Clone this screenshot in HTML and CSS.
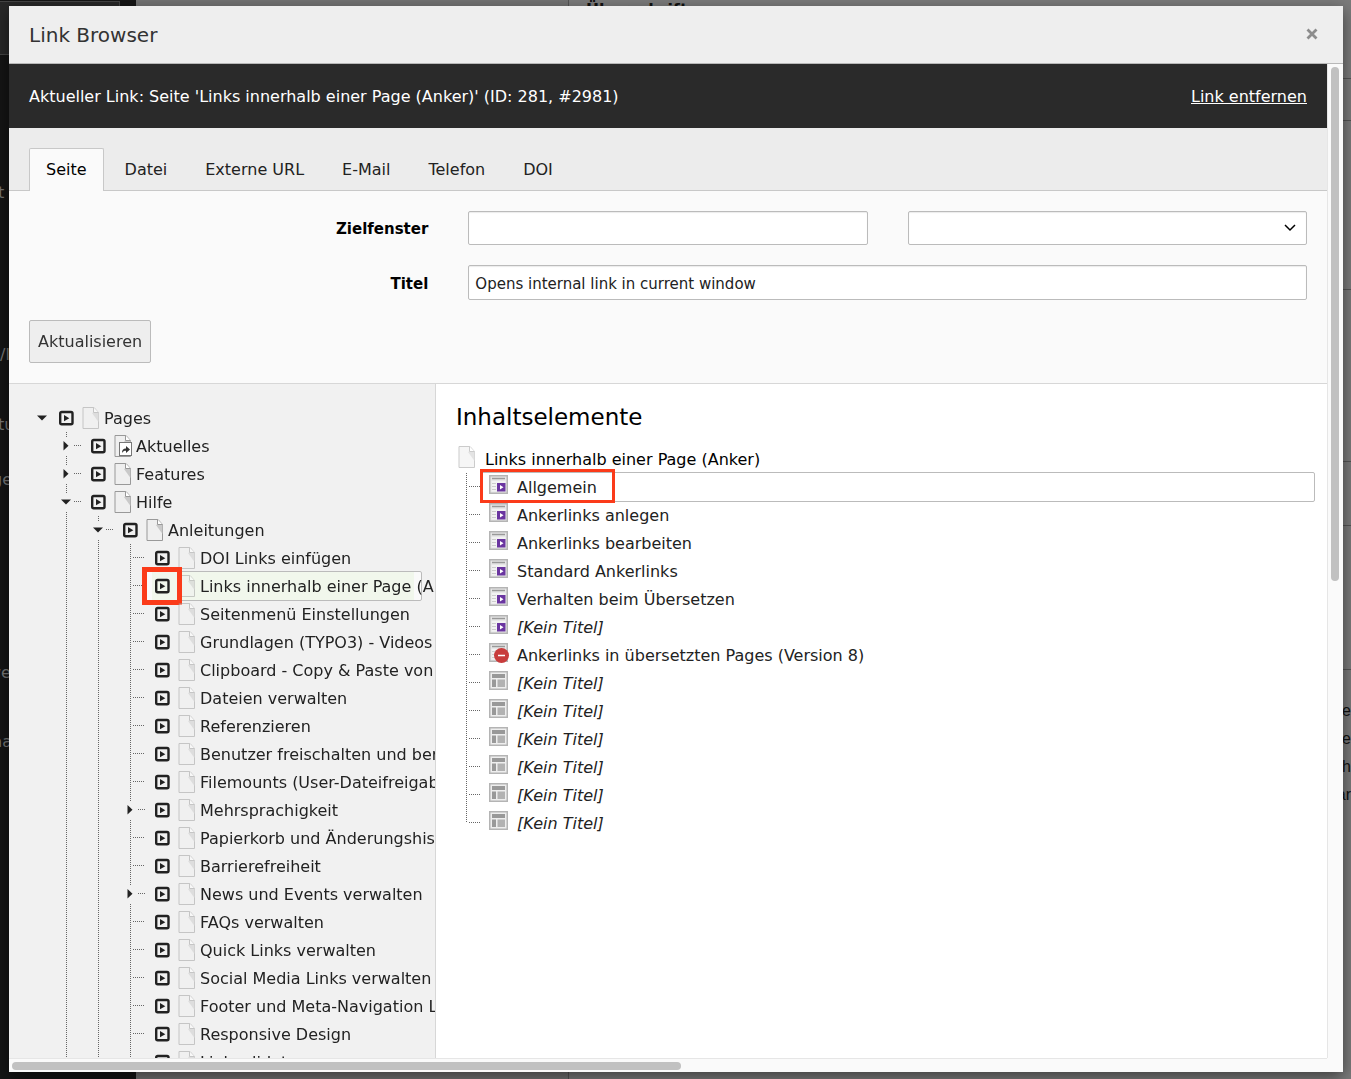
FILE: index.html
```html
<!DOCTYPE html>
<html lang="de">
<head>
<meta charset="utf-8">
<title>Link Browser</title>
<link rel="stylesheet" href="styles.css">
</head>
<body>
<svg class="sprite" aria-hidden="true">
  <symbol id="select" viewBox="0 0 16 16"><rect x="2.200" y="2" width="12.300" height="12.300" rx="1.500" fill="none" stroke="#222" stroke-width="2.400"/><path d="M6 5v6.300l5.300-3.150z" fill="#222"/></symbol>
  <symbol id="page" viewBox="0 0 18 22"><path d="M1 .5h11L16.500 5.500v16H1z" fill="#efefef" stroke="#999"/><path d="M11.500 5.500h5V15L10 6z" fill="#c9c9c9"/><path d="M11.500 .5v5h5" fill="#fff" stroke="#999"/></symbol>
  <symbol id="shortcut" viewBox="0 0 13 14"><rect x=".5" y=".5" width="12" height="13" fill="#fff" stroke="#777"/><path d="M3 11c0-3 1-4.500 4-4.500V4l4 3.500L7 11V8.800c-2 0-3 .5-4 2.200z" fill="#333"/></symbol>
  <symbol id="open" viewBox="0 0 16 16"><path d="M3 5.500h10L8 10.500z" fill="#222"/></symbol>
  <symbol id="closed" viewBox="0 0 16 16"><path d="M5.500 3v9.500l5-4.750z" fill="#222"/></symbol>
  <symbol id="plugin" viewBox="0 0 20 20"><rect x=".75" y=".75" width="17.500" height="17.500" fill="#e6e6e6" stroke="#b4b4b4" stroke-width="1.500"/><path d="M3 3.500h13" stroke="#999" stroke-width="1.500"/><path d="M2.500 6h14v10.500h-14z" fill="#f2f2f2"/><path d="M3 8.500h4M3 11.500h4M3 14.500h4" stroke="#ccc"/><rect x="8" y="8" width="8.500" height="8.500" fill="#6a35a0"/><path d="M11 10v4.500l3.500-2.250z" fill="#fff"/></symbol>
  <symbol id="hidden" viewBox="0 0 20 20"><rect x=".75" y=".75" width="17.500" height="17.500" fill="#e6e6e6" stroke="#b4b4b4" stroke-width="1.500"/><path d="M3 3.500h13" stroke="#999" stroke-width="1.500"/><path d="M2.500 6h14v10.500h-14z" fill="#f2f2f2"/><path d="M3 8.500h4M3 11.500h4M3 14.500h4" stroke="#ccc"/><circle cx="12.500" cy="12.500" r="7.500" fill="#c83c3c"/><path d="M9 12.500h7" stroke="#fff" stroke-width="1.500"/></symbol>
  <symbol id="layout" viewBox="0 0 20 20"><rect x=".75" y=".75" width="17.500" height="17.500" fill="#eee" stroke="#b4b4b4" stroke-width="1.500"/><path d="M3 3h13v4H3zM3 8.500h4V16H3z" fill="#999"/><path d="M8.500 8.500H16V16H8.500z" fill="#b2b2b2"/></symbol>
</svg>

<div class="backdrop" aria-hidden="true">
  <div class="backdrop-nav">
    <span class="nav-head"></span>
    <span class="bit bit-1">t</span>
    <span class="bit bit-2">/l</span>
    <span class="bit bit-3">tu</span>
    <span class="bit bit-4">ge</span>
    <span class="bit bit-5">we</span>
    <span class="bit bit-6">na</span>
  </div>
  <div class="backdrop-tree"></div>
  <div class="backdrop-doc">
    <b class="doc-title">Überschrift</b>
    <span class="rule rule-1"></span><span class="rule rule-2"></span><span class="rule rule-3"></span><span class="rule rule-4"></span><span class="rule rule-5"></span><span class="rule rule-6"></span>
    <p class="doc-text">te<br>e<br>h<br>ar</p>
  </div>
</div>

<div class="modal" role="dialog" aria-labelledby="modal-title">
  <header class="modal-header">
    <h1 id="modal-title">Link Browser</h1>
    <button class="close" type="button" aria-label="Schließen"><svg width="12" height="12" viewBox="0 0 12 12"><path d="M1.500 1.500l9 9M10.500 1.500l-9 9" stroke="#8c8c8c" stroke-width="2.800"/></svg></button>
  </header>
  <div class="viewport">
    <main class="content">
      <div class="current">
        <span>Aktueller Link: Seite 'Links innerhalb einer Page (Anker)' (ID: 281, #2981)</span>
        <a href="#">Link entfernen</a>
      </div>
      <nav class="tabs">
        <a class="tab active" href="#">Seite</a>
        <a class="tab" href="#">Datei</a>
        <a class="tab" href="#">Externe URL</a>
        <a class="tab" href="#">E-Mail</a>
        <a class="tab" href="#">Telefon</a>
        <a class="tab" href="#">DOI</a>
      </nav>
      <form class="form">
        <div class="fields">
          <label for="target">Zielfenster</label>
          <input id="target" type="text">
          <div class="select-wrap">
            <select aria-label="Zielfenster auswählen"><option></option></select>
            <svg width="12" height="8" viewBox="0 0 12 8"><path d="M1 1l5 5 5-5" fill="none" stroke="#000" stroke-width="1.500"/></svg>
          </div>
          <label for="title">Titel</label>
          <input id="title" class="wide" type="text" value="Opens internal link in current window">
        </div>
        <button class="update" type="button">Aktualisieren</button>
      </form>
      <div class="panels">
        <aside class="tree">
          <ul class="root">
            <li>
              <div class="row"><button class="toggle" type="button" aria-label="Zuklappen"><svg><use href="#open"/></svg></button><button class="pick" type="button" aria-label="Auswählen"><svg><use href="#select"/></svg></button><svg class="page faded"><use href="#page"/></svg><a href="#">Pages</a></div>
              <ul class="branch">
                <li><div class="row"><button class="toggle" type="button" aria-label="Aufklappen"><svg><use href="#closed"/></svg></button><button class="pick" type="button" aria-label="Auswählen"><svg><use href="#select"/></svg></button><svg class="page"><use href="#page"/><use href="#shortcut" x="5" y="7" width="13" height="14"/></svg><a href="#">Aktuelles</a></div></li>
                <li><div class="row"><button class="toggle" type="button" aria-label="Aufklappen"><svg><use href="#closed"/></svg></button><button class="pick" type="button" aria-label="Auswählen"><svg><use href="#select"/></svg></button><svg class="page"><use href="#page"/></svg><a href="#">Features</a></div></li>
                <li>
                  <div class="row"><button class="toggle" type="button" aria-label="Zuklappen"><svg><use href="#open"/></svg></button><button class="pick" type="button" aria-label="Auswählen"><svg><use href="#select"/></svg></button><svg class="page"><use href="#page"/></svg><a href="#">Hilfe</a></div>
                  <ul class="branch">
                    <li>
                      <div class="row"><button class="toggle" type="button" aria-label="Zuklappen"><svg><use href="#open"/></svg></button><button class="pick" type="button" aria-label="Auswählen"><svg><use href="#select"/></svg></button><svg class="page"><use href="#page"/></svg><a href="#">Anleitungen</a></div>
                      <ul class="branch">
                        <li><div class="row"><span class="leaf"></span><button class="pick" type="button" aria-label="Auswählen"><svg><use href="#select"/></svg></button><svg class="page faded"><use href="#page"/></svg><a href="#">DOI Links einfügen</a></div></li>
                        <li><div class="row current-page"><span class="leaf"></span><button class="pick" type="button" aria-label="Auswählen"><svg><use href="#select"/></svg></button><svg class="page faded"><use href="#page"/></svg><a href="#">Links innerhalb einer Page (Anker)</a></div></li>
                        <li><div class="row"><span class="leaf"></span><button class="pick" type="button" aria-label="Auswählen"><svg><use href="#select"/></svg></button><svg class="page faded"><use href="#page"/></svg><a href="#">Seitenmenü Einstellungen</a></div></li>
                        <li><div class="row"><span class="leaf"></span><button class="pick" type="button" aria-label="Auswählen"><svg><use href="#select"/></svg></button><svg class="page faded"><use href="#page"/></svg><a href="#">Grundlagen (TYPO3) - Videos</a></div></li>
                        <li><div class="row"><span class="leaf"></span><button class="pick" type="button" aria-label="Auswählen"><svg><use href="#select"/></svg></button><svg class="page faded"><use href="#page"/></svg><a href="#">Clipboard - Copy &amp; Paste von Inhalten</a></div></li>
                        <li><div class="row"><span class="leaf"></span><button class="pick" type="button" aria-label="Auswählen"><svg><use href="#select"/></svg></button><svg class="page faded"><use href="#page"/></svg><a href="#">Dateien verwalten</a></div></li>
                        <li><div class="row"><span class="leaf"></span><button class="pick" type="button" aria-label="Auswählen"><svg><use href="#select"/></svg></button><svg class="page faded"><use href="#page"/></svg><a href="#">Referenzieren</a></div></li>
                        <li><div class="row"><span class="leaf"></span><button class="pick" type="button" aria-label="Auswählen"><svg><use href="#select"/></svg></button><svg class="page faded"><use href="#page"/></svg><a href="#">Benutzer freischalten und berechtigen</a></div></li>
                        <li><div class="row"><span class="leaf"></span><button class="pick" type="button" aria-label="Auswählen"><svg><use href="#select"/></svg></button><svg class="page faded"><use href="#page"/></svg><a href="#">Filemounts (User-Dateifreigaben)</a></div></li>
                        <li><div class="row"><button class="toggle" type="button" aria-label="Aufklappen"><svg><use href="#closed"/></svg></button><button class="pick" type="button" aria-label="Auswählen"><svg><use href="#select"/></svg></button><svg class="page faded"><use href="#page"/></svg><a href="#">Mehrsprachigkeit</a></div></li>
                        <li><div class="row"><span class="leaf"></span><button class="pick" type="button" aria-label="Auswählen"><svg><use href="#select"/></svg></button><svg class="page faded"><use href="#page"/></svg><a href="#">Papierkorb und Änderungshistorie</a></div></li>
                        <li><div class="row"><span class="leaf"></span><button class="pick" type="button" aria-label="Auswählen"><svg><use href="#select"/></svg></button><svg class="page faded"><use href="#page"/></svg><a href="#">Barrierefreiheit</a></div></li>
                        <li><div class="row"><button class="toggle" type="button" aria-label="Aufklappen"><svg><use href="#closed"/></svg></button><button class="pick" type="button" aria-label="Auswählen"><svg><use href="#select"/></svg></button><svg class="page faded"><use href="#page"/></svg><a href="#">News und Events verwalten</a></div></li>
                        <li><div class="row"><span class="leaf"></span><button class="pick" type="button" aria-label="Auswählen"><svg><use href="#select"/></svg></button><svg class="page faded"><use href="#page"/></svg><a href="#">FAQs verwalten</a></div></li>
                        <li><div class="row"><span class="leaf"></span><button class="pick" type="button" aria-label="Auswählen"><svg><use href="#select"/></svg></button><svg class="page faded"><use href="#page"/></svg><a href="#">Quick Links verwalten</a></div></li>
                        <li><div class="row"><span class="leaf"></span><button class="pick" type="button" aria-label="Auswählen"><svg><use href="#select"/></svg></button><svg class="page faded"><use href="#page"/></svg><a href="#">Social Media Links verwalten</a></div></li>
                        <li><div class="row"><span class="leaf"></span><button class="pick" type="button" aria-label="Auswählen"><svg><use href="#select"/></svg></button><svg class="page faded"><use href="#page"/></svg><a href="#">Footer und Meta-Navigation Links</a></div></li>
                        <li><div class="row"><span class="leaf"></span><button class="pick" type="button" aria-label="Auswählen"><svg><use href="#select"/></svg></button><svg class="page faded"><use href="#page"/></svg><a href="#">Responsive Design</a></div></li>
                        <li><div class="row"><span class="leaf"></span><button class="pick" type="button" aria-label="Auswählen"><svg><use href="#select"/></svg></button><svg class="page faded"><use href="#page"/></svg><a href="#">Linkvalidator</a></div></li>
                      </ul>
                    </li>
                  </ul>
                </li>
              </ul>
            </li>
          </ul>
        </aside>
        <section class="elements">
          <h2>Inhaltselemente</h2>
          <div class="element-page"><svg class="page faded"><use href="#page"/></svg><span>Links innerhalb einer Page (Anker)</span></div>
          <ul class="element-list">
            <li class="chosen"><span class="leaf"></span><a href="#"><svg><use href="#plugin"/></svg><span>Allgemein</span></a></li>
            <li><span class="leaf"></span><a href="#"><svg><use href="#plugin"/></svg><span>Ankerlinks anlegen</span></a></li>
            <li><span class="leaf"></span><a href="#"><svg><use href="#plugin"/></svg><span>Ankerlinks bearbeiten</span></a></li>
            <li><span class="leaf"></span><a href="#"><svg><use href="#plugin"/></svg><span>Standard Ankerlinks</span></a></li>
            <li><span class="leaf"></span><a href="#"><svg><use href="#plugin"/></svg><span>Verhalten beim Übersetzen</span></a></li>
            <li><span class="leaf"></span><a href="#"><svg><use href="#plugin"/></svg><em>[Kein Titel]</em></a></li>
            <li><span class="leaf"></span><a href="#"><svg><use href="#hidden"/></svg><span>Ankerlinks in übersetzten Pages (Version 8)</span></a></li>
            <li><span class="leaf"></span><a href="#"><svg><use href="#layout"/></svg><em>[Kein Titel]</em></a></li>
            <li><span class="leaf"></span><a href="#"><svg><use href="#layout"/></svg><em>[Kein Titel]</em></a></li>
            <li><span class="leaf"></span><a href="#"><svg><use href="#layout"/></svg><em>[Kein Titel]</em></a></li>
            <li><span class="leaf"></span><a href="#"><svg><use href="#layout"/></svg><em>[Kein Titel]</em></a></li>
            <li><span class="leaf"></span><a href="#"><svg><use href="#layout"/></svg><em>[Kein Titel]</em></a></li>
            <li><span class="leaf"></span><a href="#"><svg><use href="#layout"/></svg><em>[Kein Titel]</em></a></li>
          </ul>
        </section>
      </div>
    </main>
    <div class="scroll-y"><span></span></div>
    <div class="scroll-x"><span></span></div>
  </div>
</div>
</body>
</html>
```
FILE: styles.css
```css
*, *::before, *::after { box-sizing: border-box; }

body {
  margin: 0;
  height: 100vh;
  padding: 6px 8px 7px 9px;
  overflow: hidden;
  background: #757575;
  color: #222;
  font: 16px/28px Verdana, "DejaVu Sans", sans-serif;
}

a { color: inherit; text-decoration: none; }
ul { list-style: none; margin: 0; padding: 0; }
button, input, select { font: inherit; color: inherit; margin: 0; }
svg { display: block; flex: none; }
.sprite { position: absolute; width: 0; height: 0; }

/* Page behind the dialog */
.backdrop { position: fixed; inset: 0; display: flex; z-index: -1; overflow: hidden; }
.backdrop-nav { position: relative; width: 136px; background: #151515; color: #777; overflow: hidden; }
.nav-head { display: block; width: 120px; height: 54px; background: #282828; border: 1px solid #444; border-left: 0; margin-top: 1px; }
.bit { position: absolute; left: -2px; }
.bit-1 { top: 179px; }
.bit-2 { top: 341px; left: 0; }
.bit-3 { top: 411px; }
.bit-4 { top: 466px; left: -8px; }
.bit-5 { top: 659px; left: -12px; }
.bit-6 { top: 728px; left: -8px; }
.backdrop-tree { width: 433px; border-right: 1px solid #555; background: #737373; }
.backdrop-doc { position: relative; flex: 1; background: #7b7b7b; color: #111; }
.doc-title { position: absolute; left: 17px; top: 0; line-height: 20px; }
.rule { position: absolute; right: 0; width: 20px; height: 1px; background: #555; }
.rule-1 { top: 78px; }
.rule-2 { top: 120px; }
.rule-3 { top: 289px; }
.rule-4 { top: 461px; }
.rule-5 { top: 525px; }
.rule-6 { top: 669px; }
.doc-text { position: absolute; right: 0; top: 697px; margin: 0; font-family: "Liberation Sans", sans-serif; text-align: right; }

/* Dialog */
.modal {
  display: flex;
  flex-direction: column;
  height: 100%;
  background: #fafafa;
  box-shadow: 0 5px 15px rgba(0, 0, 0, .5);
}
.modal-header {
  display: flex;
  align-items: center;
  justify-content: space-between;
  padding: 14px 25px 15px 20px;
  background: #eee;
  border-bottom: 1px solid #b8b8b8;
}
h1 { margin: 0; padding-top: 2px; font-size: 20px; font-weight: 400; line-height: 26px; color: #333; }
.close { padding: 0; border: 0; background: none; }

.viewport {
  display: grid;
  grid-template: minmax(0, 1fr) 14px / minmax(0, 1fr) 16px;
  flex: 1;
  min-height: 0;
}
.content { display: flex; flex-direction: column; overflow: hidden; }
.scroll-y { border-left: 1px solid #e6e6e6; padding: 3px; }
.scroll-y span { display: block; width: 8px; height: 52%; border-radius: 4px; background: #c1c1c1; }
.scroll-x { border-top: 1px solid #e6e6e6; padding: 3px; }
.scroll-x span { display: block; width: 51%; height: 8px; border-radius: 4px; background: #c1c1c1; }

.current {
  display: flex;
  justify-content: space-between;
  padding: 19px 20px 17px;
  background: #2a2a2a;
  color: #fff;
}
.current a { text-decoration: underline; }

.tabs {
  display: flex;
  gap: 4px;
  padding: 20px 20px 0;
  background: #ececec;
  box-shadow: inset 0 -1px #c8c8c8;
}
.tab { padding: 7px 16px; border: 1px solid transparent; border-bottom: 0; border-radius: 2px 2px 0 0; }
.tab.active { background: #fafafa; border-color: #c8c8c8; color: #000; }

.form { padding: 20px; border-bottom: 1px solid #d7d7d7; background: #fafafa; }
.fields { display: grid; grid-template-columns: repeat(3, minmax(0, 1fr)); gap: 20px 40px; align-items: center; }
.fields label { padding-top: 2px; text-align: right; font-size: 15px; font-weight: 700; color: #000; }
.fields input, .fields select {
  width: 100%;
  height: 34px;
  padding: 2px 6px 0;
  border: 1px solid #bbb;
  border-radius: 2px;
  background: #fff;
  box-shadow: inset 0 1px 1px rgba(0, 0, 0, .08);
  font-size: 15px;
}
.fields select { appearance: none; display: block; grid-area: 1 / 1; }
.select-wrap { display: grid; align-items: center; }
.select-wrap svg { grid-area: 1 / 1; justify-self: end; margin-right: 11px; pointer-events: none; }
.fields .wide { grid-column: span 2; height: 35px; }
.update {
  margin-top: 20px;
  padding: 7px 8px 6px;
  border: 1px solid #bbb;
  border-radius: 2px;
  background: #eee;
  color: #333;
  display: block;
}

.panels { display: grid; grid-template-columns: 427px minmax(0, 1fr); flex: 1; min-height: 0; }
.tree { padding: 20px 0 0 25px; border-right: 1px solid #d7d7d7; background: #f1f1f1; overflow: hidden; }
.row { display: flex; align-items: center; height: 28px; white-space: nowrap; }
.row a { padding-top: 2px; }

/* Dotted guide lines of the trees */
.branch, .element-list {
  background: repeating-linear-gradient(#666 0 1px, transparent 1px 2px) 8px 0 / 1px 100% no-repeat;
}
.branch .branch { margin-left: 32px; }
.branch { margin-left: 24px; }
.toggle, .leaf {
  flex: none;
  width: 32px;
  height: 28px;
  padding: 0;
  border: 0;
  background: repeating-linear-gradient(90deg, #666 0 1px, transparent 1px 2px) 11px 13px / 12px 1px no-repeat;
}
.toggle { background-position: 16px 13px; background-size: 8px 1px; }
.toggle svg { width: 16px; height: 18px; background: #f1f1f1; }
.root > li > .row > .toggle { width: 24px; background: none; }
.pick { padding: 0; border: 0; background: none; }
.pick svg { width: 16px; height: 16px; }
.page { width: 18px; height: 22px; margin: 0 4px 0 8px; }
.faded { opacity: .5; }

.current-page { position: relative; z-index: 0; }
.current-page::before {
  content: "";
  position: absolute;
  z-index: -1;
  inset: -1px 13px -1px 22px;
  border: 1px solid #bbb;
  border-radius: 2px;
  background: linear-gradient(#f1f7ec, #f1f7ec) 7px 0 / calc(100% - 14px) 100% no-repeat #fafafa;
}
.current-page::after {
  content: "";
  position: absolute;
  left: 20px;
  top: -5px;
  width: 40px;
  height: 38px;
  border: 5px solid #fb3b1a;
}

.elements { padding: 20px 12px 20px 20px; background: #fff; color: #222; }
h2 { margin: 0 0 13px; color: #000; font-size: 23px; font-weight: 400; line-height: 26px; }
.element-page { display: flex; color: #000; }
.element-page .page { margin: 3px 9px 0 2px; }
.element-page span { padding-top: 3px; line-height: 27px; }
.element-list { margin: 0 0 0 2px; background-size: 1px calc(100% - 14px); }
.element-list li { position: relative; display: flex; height: 28px; }
.element-list .leaf { width: 31px; }
.element-list a { display: flex; flex: 1; align-items: center; gap: 8px; }
.element-list a svg { width: 20px; height: 20px; margin-bottom: 4px; }
.element-list a span, .element-list em { padding-top: 2px; }
.chosen::before {
  content: "";
  position: absolute;
  inset: -1px 0 -1px 23px;
  border: 1px solid #bbb;
  border-radius: 2px;
}
.chosen::after {
  content: "";
  position: absolute;
  left: 22px;
  top: -4px;
  width: 135px;
  height: 34px;
  border: 3px solid #fb3b1a;
}
```
